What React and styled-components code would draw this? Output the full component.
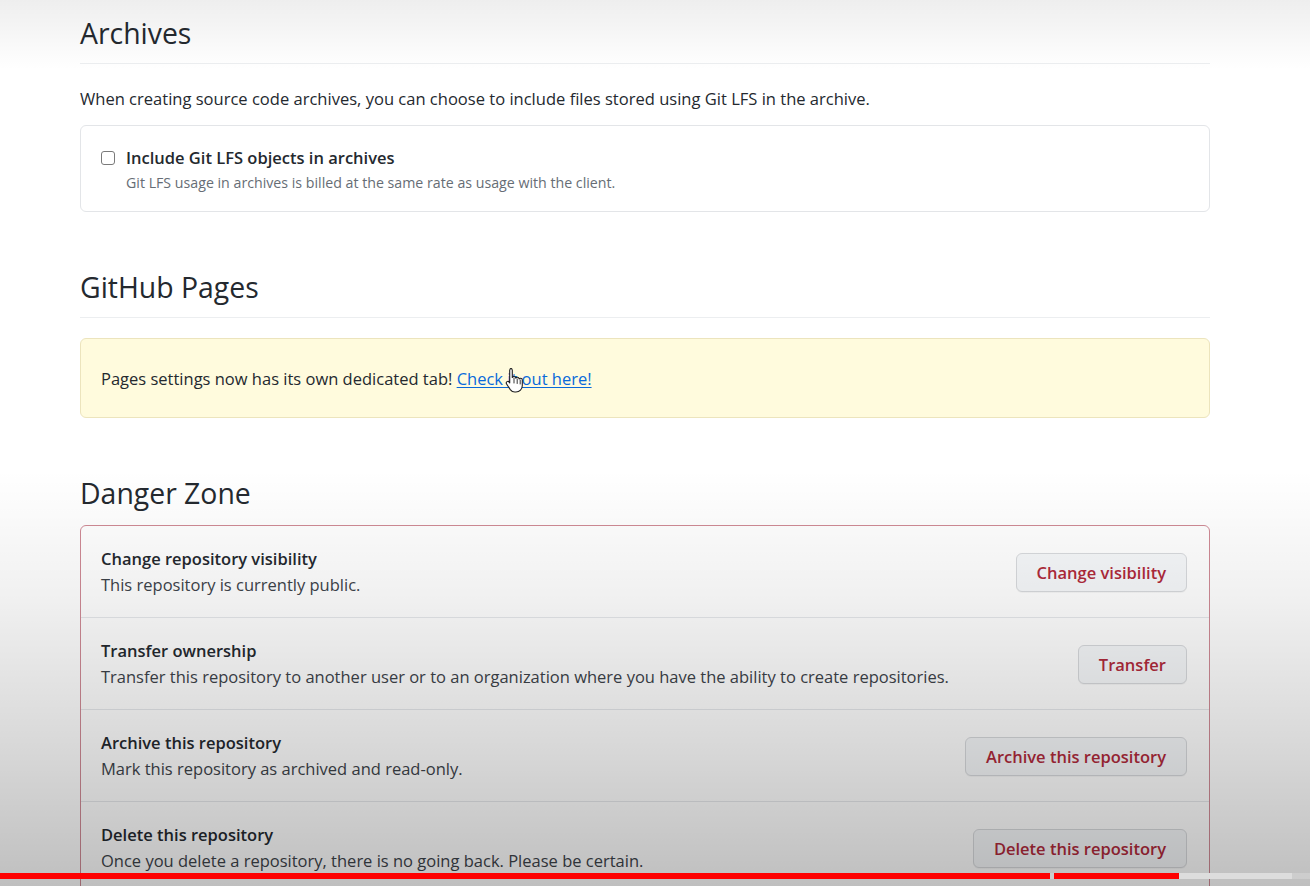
import React from "react";
import styled, { createGlobalStyle } from "styled-components";

const Global = createGlobalStyle`
  html, body { margin: 0; padding: 0; background: #ffffff; }
  body {
    font-family: "Open Sans", "Noto Sans", sans-serif;
    color: #24292f;
    overflow: hidden;
  }
  * { box-sizing: border-box; }
`;

const Page = styled.div`
  position: relative;
  width: 1310px;
  height: 886px;
  overflow: hidden;
  background: #ffffff;
`;

const Content = styled.main`
  width: 1130px;
  margin-left: 80px;
  display: flex;
  flex-direction: column;
`;

const Section = styled.section`
  display: flex;
  flex-direction: column;
  margin-top: ${(p) => p.$top}px;
`;

const Heading = styled.h2`
  margin: 0;
  font-size: 28.4px;
  line-height: 35px;
  font-weight: 400;
  color: #24292f;
  padding-bottom: ${(p) => (p.$rule ? 12 : 0)}px;
  border-bottom: ${(p) => (p.$rule ? "1px solid #eceef0" : "none")};
`;

const Lead = styled.p`
  margin: 23px 0 0;
  font-size: 16.55px;
  line-height: 24px;
  color: #24292f;
`;

const Box = styled.div`
  margin-top: 14px;
  border: 1px solid #e3e5e8;
  border-radius: 6px;
  background: #ffffff;
  padding: 20px 20px 18px;
`;

const CheckRow = styled.label`
  display: flex;
  align-items: center;
  gap: 11px;
  font-size: 16.5px;
  line-height: 24px;
  font-weight: 600;
  color: #24292f;
`;

const CheckBox = styled.span`
  width: 14px;
  height: 14px;
  border: 1.5px solid #7a7a7a;
  border-radius: 3px;
  background: #fff;
  flex: none;
`;

const Note = styled.div`
  margin-top: 3px;
  padding-left: 25px;
  font-size: 14.2px;
  line-height: 20px;
  color: #666d75;
`;

const Flash = styled.div`
  position: relative;
  margin-top: 20px;
  border: 1px solid #ece4bd;
  border-radius: 6px;
  background: #fffbdd;
  padding: 28px 20px 26px;
  font-size: 16.5px;
  line-height: 24px;
  color: #24292f;
`;

const Link = styled.a`
  color: #0969da;
  text-decoration: underline;
  text-underline-offset: 2px;
`;

const Cursor = styled.svg`
  position: absolute;
  left: 424px;
  top: 28px;
  width: 19px;
  height: 26px;
  pointer-events: none;
`;

const DangerBox = styled.div`
  margin-top: 14px;
  border: 1px solid #cf8a95;
  border-radius: 6px;
  background: #ffffff;
  display: flex;
  flex-direction: column;
`;

const DangerRow = styled.div`
  display: flex;
  align-items: center;
  justify-content: space-between;
  padding: 21px 22px 20px 20px;
  border-top: ${(p) => (p.$first ? "none" : "1px solid #e6e8eb")};
`;

const RowText = styled.div`
  display: flex;
  flex-direction: column;
  gap: 2px;
`;

const RowTitle = styled.div`
  font-size: 16.5px;
  line-height: 24px;
  font-weight: 600;
  color: #24292f;
`;

const RowDesc = styled.div`
  font-size: 16.5px;
  line-height: 24px;
  color: #3d434a;
`;

const DangerButton = styled.button`
  height: 39px;
  padding: 0 20px;
  border: 1px solid #d8dadd;
  border-radius: 6px;
  background: #f6f8fa;
  color: #b02a3b;
  font-family: inherit;
  font-size: 16.5px;
  font-weight: 600;
  box-shadow: 0 1px 0 rgba(27, 31, 36, 0.04);
  cursor: pointer;
`;

const Shade = styled.div`
  position: absolute;
  inset: 0;
  pointer-events: none;
  background:
    linear-gradient(to bottom, rgba(0,0,0,0.065) 0px, rgba(0,0,0,0) 70px),
    linear-gradient(to bottom, rgba(0,0,0,0) 470px, rgba(0,0,0,0.06) 600px, rgba(0,0,0,0.15) 740px, rgba(0,0,0,0.25) 886px);
`;

const Progress = styled.div`
  position: absolute;
  left: 0;
  right: 0;
  top: 873px;
  height: 6px;
  display: flex;
  background: rgba(255, 255, 255, 0.2);
`;

const Segment = styled.div`
  height: 100%;
  flex: none;
  background: ${(p) => p.$color};
  margin-right: ${(p) => p.$gap || 0}px;
`;

const dangerItems = [
  {
    title: "Change repository visibility",
    desc: "This repository is currently public.",
    action: "Change visibility",
  },
  {
    title: "Transfer ownership",
    desc: "Transfer this repository to another user or to an organization where you have the ability to create repositories.",
    action: "Transfer",
  },
  {
    title: "Archive this repository",
    desc: "Mark this repository as archived and read-only.",
    action: "Archive this repository",
  },
  {
    title: "Delete this repository",
    desc: "Once you delete a repository, there is no going back. Please be certain.",
    action: "Delete this repository",
  },
];

export default function App() {
  return (
    <>
      <Global />
      <Page>
        <Content>
          <Section $top={16}>
            <Heading $rule>Archives</Heading>
            <Lead>
              When creating source code archives, you can choose to include files stored using Git LFS in the archive.
            </Lead>
            <Box>
              <CheckRow>
                <CheckBox />
                Include Git LFS objects in archives
              </CheckRow>
              <Note>Git LFS usage in archives is billed at the same rate as usage with the client.</Note>
            </Box>
          </Section>

          <Section $top={58}>
            <Heading $rule>GitHub Pages</Heading>
            <Flash>
              Pages settings now has its own dedicated tab!{" "}
              <Link href="#">Check it out here!</Link>
              <Cursor viewBox="0 0 19 26">
                <path
                  d="M5.5 1.5c1 0 1.8.8 1.8 1.8v7.2c.3-.6 1-1 1.7-1 1 0 1.7.7 1.8 1.6.3-.5.9-.8 1.5-.8 1 0 1.7.7 1.8 1.6.3-.4.8-.6 1.4-.6 1 0 1.8.8 1.8 1.8v5.4c0 3.8-2.7 6.5-6.4 6.5H9.8c-2 0-3.4-.9-4.5-2.4L1.6 17c-.6-.8-.4-1.9.4-2.4.7-.5 1.7-.3 2.2.4l-.1.1.6.8V3.3c0-1 .8-1.8 1.8-1.8z"
                  fill="#ffffff"
                  stroke="#1f1f1f"
                  strokeWidth="1.1"
                  strokeLinejoin="round"
                />
                <path d="M9 11v5M12.2 12v4.5M15.2 13v4" stroke="#1f1f1f" strokeWidth="0.9" strokeLinecap="round" />
              </Cursor>
            </Flash>
          </Section>

          <Section $top={58}>
            <Heading>Danger Zone</Heading>
            <DangerBox>
              {dangerItems.map((item, i) => (
                <DangerRow key={item.title} $first={i === 0}>
                  <RowText>
                    <RowTitle>{item.title}</RowTitle>
                    <RowDesc>{item.desc}</RowDesc>
                  </RowText>
                  <DangerButton>{item.action}</DangerButton>
                </DangerRow>
              ))}
            </DangerBox>
          </Section>
        </Content>
        <Shade />
        <Progress>
          <Segment $color="#ff0000" style={{ width: 1050 }} $gap={4} />
          <Segment $color="#ff0000" style={{ width: 125 }} />
          <Segment $color="#dddddd" style={{ width: 113 }} />
        </Progress>
      </Page>
    </>
  );
}
